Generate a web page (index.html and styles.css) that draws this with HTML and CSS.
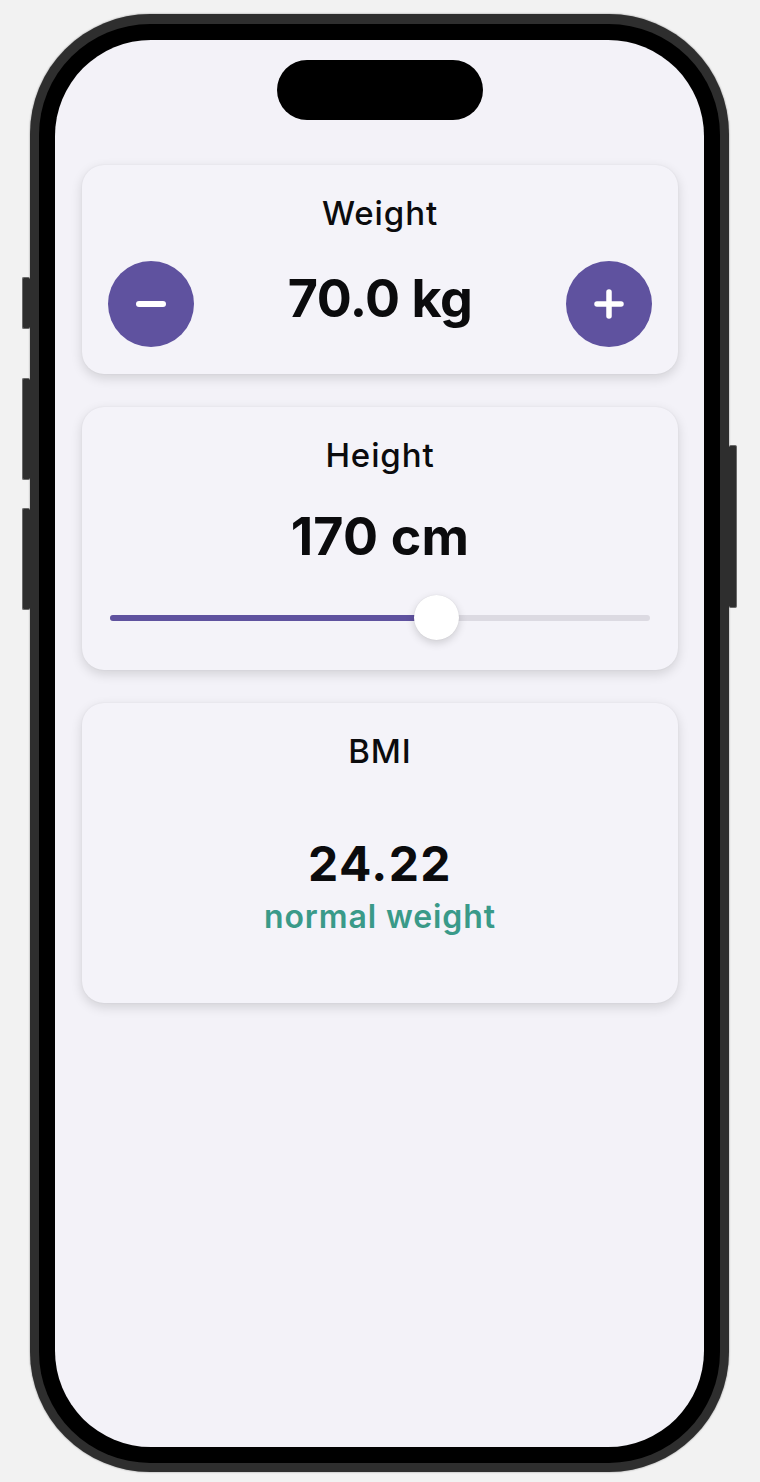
FILE: index.html
```html
<!DOCTYPE html>
<html lang="en">
<head>
<meta charset="utf-8">
<title>BMI</title>
<link rel="stylesheet" href="styles.css">
</head>
<body>
<div class="phone">
  <div class="side-btn btn-action"></div>
  <div class="side-btn btn-volup"></div>
  <div class="side-btn btn-voldown"></div>
  <div class="side-btn btn-power"></div>
  <div class="bezel">
    <div class="screen">
      <div class="island"></div>
      <div class="content">
        <section class="card card-weight">
          <div class="card-title">Weight</div>
          <div class="stepper">
            <button class="round-btn" aria-label="decrease">
              <svg width="30" height="30" viewBox="0 0 30 30"><line x1="3" y1="15" x2="27" y2="15" stroke="#fff" stroke-width="6" stroke-linecap="round"/></svg>
            </button>
            <div class="value value-weight">70.0 kg</div>
            <button class="round-btn" aria-label="increase">
              <svg width="30" height="30" viewBox="0 0 30 30"><line x1="3" y1="15" x2="27" y2="15" stroke="#fff" stroke-width="5.5" stroke-linecap="round"/><line x1="15" y1="3" x2="15" y2="27" stroke="#fff" stroke-width="5.5" stroke-linecap="round"/></svg>
            </button>
          </div>
        </section>
        <section class="card card-height">
          <div class="card-title">Height</div>
          <div class="value value-height">170 cm</div>
          <div class="slider">
            <div class="track"><div class="fill" style="width: 326px"></div></div>
            <div class="thumb" style="left: 306px"></div>
          </div>
        </section>
        <section class="card card-bmi">
          <div class="card-title">BMI</div>
          <div class="bmi-value">24.22</div>
          <div class="bmi-label">normal weight</div>
        </section>
      </div>
    </div>
  </div>
</div>
</body>
</html>
```
FILE: styles.css
```css
* { box-sizing: border-box; }
html, body { margin: 0; padding: 0; }
body {
  background: #f2f2f2;
  width: 760px;
  height: 1482px;
  overflow: hidden;
  font-family: Inter, "Noto Sans", "Liberation Sans", sans-serif;
  color: #0b0b0d;
}
.phone {
  position: relative;
  margin: 14px 0 0 30px;
  width: 699px;
  height: 1458px;
  border-radius: 120px;
  background: #2e2e2e;
  padding: 10px 9px 9px 9px;
  box-shadow: 0 0 2px rgba(0,0,0,0.45);
}
.side-btn {
  position: absolute;
  width: 8px;
  background: #2e2e2e;
  border: 1px solid #6a6a6a;
  border-radius: 2px;
}
.btn-action { left: -8px; top: 263px; height: 52px; border-right: none; }
.btn-volup { left: -8px; top: 364px; height: 102px; border-right: none; }
.btn-voldown { left: -8px; top: 494px; height: 102px; border-right: none; }
.btn-power { right: -8px; top: 431px; height: 163px; border-left: none; width: 8px; }
.bezel {
  width: 100%;
  height: 100%;
  background: #000;
  border-radius: 111px;
  padding: 16px;
}
.screen {
  position: relative;
  width: 100%;
  height: 100%;
  background: #f3f2f8;
  border-radius: 96px;
  overflow: hidden;
}
.island {
  position: absolute;
  top: 20px;
  left: 50%;
  margin-left: -103px;
  width: 206px;
  height: 60px;
  border-radius: 30px;
  background: #000;
}
.content {
  padding: 125px 26px 0 27px;
  display: flex;
  flex-direction: column;
  gap: 33px;
}
.card {
  background: #f4f3f9;
  border-radius: 22px;
  box-shadow: 0 4px 12px rgba(0,0,0,0.14), 0 0 2px rgba(0,0,0,0.06);
  padding: 29px 26px 27px;
  display: flex;
  flex-direction: column;
  align-items: stretch;
}
.card-title {
  font-size: 33px;
  line-height: 39px;
  font-weight: 500;
  text-align: center;
  letter-spacing: 0.9px;
}
.stepper {
  margin-top: 28px;
  height: 86px;
  display: flex;
  align-items: center;
  justify-content: space-between;
}
.round-btn {
  width: 86px;
  height: 86px;
  border-radius: 50%;
  border: none;
  padding: 0;
  background: #5f529f;
  display: flex;
  align-items: center;
  justify-content: center;
}
.round-btn svg { display: block; }
.value {
  font-size: 52px;
  line-height: 63px;
  font-weight: 700;
  text-align: center;
  letter-spacing: -0.5px;
}
.value-weight { padding-bottom: 12px; }
.value-height { margin-top: 30px; letter-spacing: 0.2px; }
.slider {
  position: relative;
  margin-top: 27px;
  height: 45px;
  display: flex;
  align-items: center;
  padding: 0 2px;
}
.track {
  width: 100%;
  height: 6px;
  border-radius: 3px;
  background: #dcdae2;
  overflow: hidden;
}
.fill {
  height: 100%;
  background: #5f529f;
}
.thumb {
  position: absolute;
  top: 0;
  width: 45px;
  height: 45px;
  border-radius: 50%;
  background: #fff;
  box-shadow: 0 3px 9px rgba(0,0,0,0.16), 0 0 1px rgba(0,0,0,0.12);
}
.card-height { padding-bottom: 30px; }
.card-bmi { padding-bottom: 67px; }
.bmi-value {
  margin-top: 64px;
  font-size: 48px;
  line-height: 58px;
  font-weight: 700;
  text-align: center;
  letter-spacing: 1.4px;
}
.bmi-label {
  margin-top: 4px;
  font-size: 32px;
  line-height: 39px;
  font-weight: 600;
  color: #3a9a89;
  text-align: center;
  letter-spacing: 0.9px;
}
```
